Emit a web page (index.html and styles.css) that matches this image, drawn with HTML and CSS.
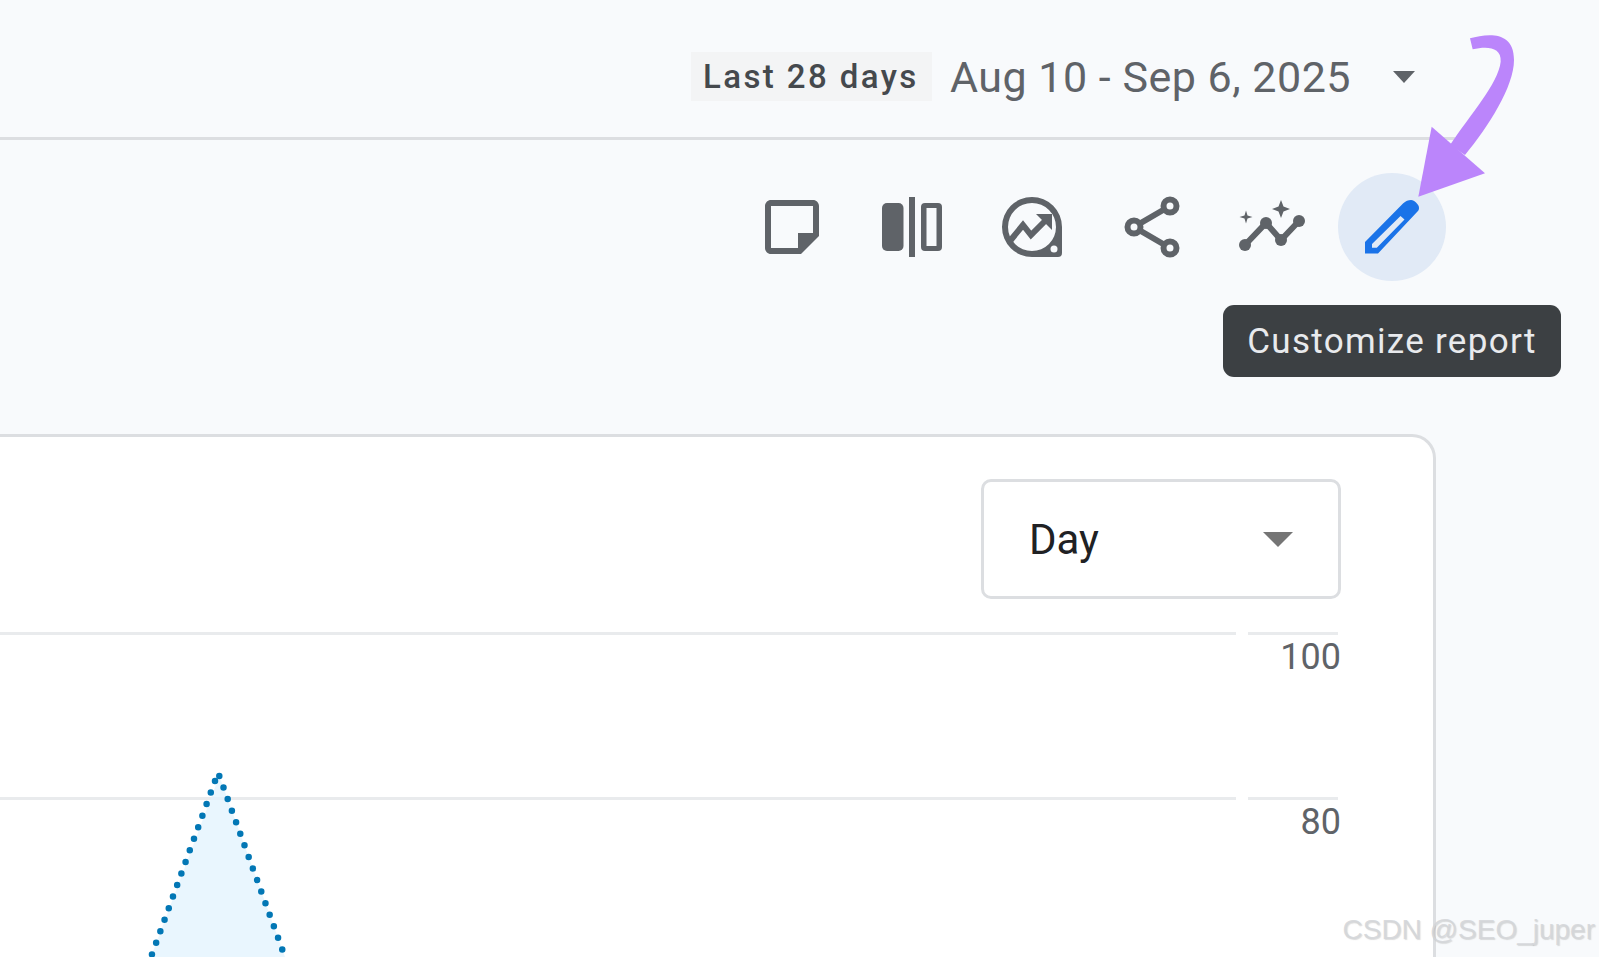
FILE: index.html
```html
<!DOCTYPE html>
<html lang="en">
<head>
    <meta charset="UTF-8">
    <title>Reports snapshot</title>
    <link rel="stylesheet" href="styles.css">
</head>
<body>
    <header class="header">
        <span class="range-label">Last 28 days</span>
        <span class="range-dates">Aug 10 - Sep 6, 2025</span>
        <span class="caret caret-header"></span>
    </header>

    <div class="toolbar">
        <button class="tool" type="button">
            <svg class="icon" viewBox="0 0 24 24"><path fill-rule="evenodd" d="M19 3H5c-1.100 0-2 .9-2 2v14c0 1.100.9 2 2 2h10l6-6V5c0-1.100-.9-2-2-2zm0 11h-5v5H5V5h14v9z"/></svg>
        </button>
        <button class="tool" type="button">
            <svg class="icon" viewBox="0 0 72 72">
                <rect x="6" y="12" width="21.500" height="48" rx="5"/>
                <rect x="33" y="6" width="6" height="60"/>
                <path fill-rule="evenodd" d="M49 12h13a4 4 0 0 1 4 4v40a4 4 0 0 1-4 4H49a4 4 0 0 1-4-4V16a4 4 0 0 1 4-4zm1.500 5v38h10V17z"/>
            </svg>
        </button>
        <button class="tool" type="button">
            <svg class="icon" viewBox="0 0 72 72">
                <path fill-rule="evenodd" d="M36 6a30 30 0 0 0 0 60h26a4 4 0 0 0 4-4V36A30 30 0 0 0 36 6zm0 6a24 24 0 1 1 0 48 24 24 0 0 1 0-48z"/>
                <circle class="icon-hole" cx="58" cy="58" r="3.500"/>
                <path class="icon-line icon-line-heavy" d="M14 50 27 34l8 10 17-17"/>
                <path d="M40 23h16v16z"/>
            </svg>
        </button>
        <button class="tool" type="button">
            <svg class="icon" viewBox="0 0 72 72">
                <path class="icon-line icon-line-heavy" d="M54 15 18 36l36 21"/>
                <circle class="icon-node" cx="54" cy="15" r="6.500"/>
                <circle class="icon-node" cx="18" cy="36" r="6.500"/>
                <circle class="icon-node" cx="54" cy="57" r="6.500"/>
            </svg>
        </button>
        <button class="tool" type="button">
            <svg class="icon" viewBox="0 0 72 72">
                <path class="icon-line icon-line-heavy" d="M9 54 30 32l15 17 18-19"/>
                <circle cx="9" cy="54" r="6"/>
                <circle cx="30" cy="32" r="6"/>
                <circle cx="45" cy="49" r="6"/>
                <circle cx="63" cy="30" r="6"/>
                <path d="M45 9l2.500 6.500L54 18l-6.500 2.500L45 27l-2.500-6.500L36 18l6.500-2.500z"/>
                <path d="M10 19.500l1.500 5 5 1.500-5 1.500-1.500 5-1.500-5-5-1.500 5-1.500z"/>
            </svg>
        </button>
        <button class="tool tool-active" type="button">
            <svg class="icon icon-blue" viewBox="0 0 72 72">
                <path fill-rule="evenodd" d="M9 62.500V51L47 12.500c2.500-2.500 5.500-3.500 8-3.500 2 0 3.500 1 5 2.500 2 2 3 3.500 3 5.500 0 1.500-.5 2.500-1.500 3.500L22 62.500zM16 53v3.800h4.800L48.500 28.500 44.500 25z"/>
            </svg>
            <span class="tooltip">Customize report</span>
        </button>
    </div>

    <section class="card">
        <div class="card-top">
            <div class="select">
                <span>Day</span>
                <span class="caret caret-select"></span>
            </div>
        </div>
        <div class="plot">
            <div class="grid-row">
                <div class="grid-line"><i></i><i class="tick"></i></div>
                <div class="axis-label">100</div>
            </div>
            <div class="grid-row">
                <div class="grid-line"><i></i><i class="tick"></i></div>
                <div class="axis-label">80</div>
            </div>
            <svg class="series" viewBox="100 772 220 185">
                <path class="series-fill" d="M219.300 776 285 957H151z"/>
                <path class="series-dots" d="M219.300 776 285 957"/>
                <path class="series-dots" d="M215 781 151 957"/>
            </svg>
        </div>
    </section>

    <svg class="arrow" viewBox="0 0 1440 1110">
        <path d="M1140 55C1190 42 1272 30 1272 120C1272 200 1195 320 1125 405L1080 375C1140 285 1225 190 1232 125C1235 80 1190 78 1148 88z"/>
        <path d="M1025 320 1185 460 985 530z"/>
    </svg>

    <div class="watermark">CSDN @SEO_juper</div>
</body>
</html>
```

FILE: styles.css
```css
* {
    box-sizing: border-box;
}
html, body {
    margin: 0;
    height: 100%;
}
body {
    position: relative;
    overflow: hidden;
    background-color: #f8fafc;
    font-family: 'Roboto', 'Liberation Sans', sans-serif;
}

/* date range header */
.header {
    display: flex;
    align-items: center;
    justify-content: flex-end;
    width: 1455px;
    height: 140px;
    padding: 16px 40px 0 0;
    border-bottom: 3px solid #dcdee1;
}
.range-label {
    display: block;
    width: 241px;
    height: 49px;
    line-height: 49px;
    padding-left: 12px;
    background-color: #f3f4f5;
    color: #45494d;
    font-size: 33px;
    font-weight: 500;
    letter-spacing: 2.4px;
    white-space: nowrap;
}
.range-dates {
    margin-left: 18px;
    color: #5f6368;
    font-size: 43px;
    letter-spacing: 0.5px;
    white-space: nowrap;
}
.caret {
    display: block;
    width: 0;
    height: 0;
    border-style: solid;
    border-color: transparent;
    border-bottom-width: 0;
}
.caret-header {
    margin-left: 42px;
    border-width: 12px 11px 0;
    border-top-color: #5f6368;
}

/* icon row */
.toolbar {
    display: flex;
    justify-content: flex-end;
    gap: 12px;
    padding: 33px 153px 0 0;
}
.tool {
    position: relative;
    display: flex;
    align-items: center;
    justify-content: center;
    width: 108px;
    height: 108px;
    padding: 0;
    border: none;
    border-radius: 50%;
    background: none;
    font-family: inherit;
}
.tool-active {
    background-color: #e1eaf6;
}
.icon {
    display: block;
    width: 72px;
    height: 72px;
    fill: #5f6368;
}
.icon-blue {
    fill: #1a73e8;
}
.icon-hole {
    fill: #f8fafc;
}
.icon-line {
    fill: none;
    stroke: #5f6368;
    stroke-width: 5;
}
.icon-line-heavy {
    stroke-width: 6;
}
.icon-node {
    fill: #f8fafc;
    stroke: #5f6368;
    stroke-width: 6;
}
.tooltip {
    position: absolute;
    top: 132px;
    left: -115px;
    width: 338px;
    height: 72px;
    line-height: 73px;
    border-radius: 11px;
    background-color: #3c4043;
    color: #e8eaed;
    font-size: 35px;
    letter-spacing: 1.3px;
    text-align: center;
    white-space: nowrap;
}

/* chart card */
.card {
    width: 1439px;
    height: 560px;
    margin: 153px 0 0 -3px;
    padding: 42px 92px 0 0;
    border: 3px solid #dcdee1;
    border-bottom: none;
    border-top-right-radius: 24px;
    background-color: #fff;
}
.card-top {
    display: flex;
    justify-content: flex-end;
}
.select {
    display: flex;
    align-items: center;
    justify-content: space-between;
    width: 360px;
    height: 120px;
    padding: 0 45px 0 45px;
    border: 3px solid #dcdee1;
    border-radius: 10px;
    color: #202124;
    font-size: 42px;
}
.caret-select {
    border-width: 15px 15px 0;
    border-top-color: #757575;
}
.plot {
    position: relative;
    margin-top: 33px;
}
.grid-row {
    height: 165px;
}
.grid-line {
    display: flex;
    gap: 12px;
    width: 1338px;
    height: 3px;
}
.grid-line i {
    flex: 1;
    background-color: #e9ebed;
}
.grid-line .tick {
    flex: none;
    width: 90px;
}
.axis-label {
    width: 1341px;
    margin-top: 2px;
    color: #5f6368;
    font-size: 36px;
    line-height: 41px;
    text-align: right;
}
.series {
    position: absolute;
    top: 140px;
    left: 100px;
    width: 220px;
    height: 185px;
}
.series-fill {
    fill: #dff2fd;
    opacity: 0.7;
}
.series-dots {
    fill: none;
    stroke: #0277b5;
    stroke-width: 6.500;
    stroke-linecap: round;
    stroke-dasharray: 0 12.300;
}

/* over everything */
.arrow {
    position: absolute;
    top: 20px;
    left: 1090px;
    width: 480px;
    height: 370px;
    fill: #bb85fb;
}
.watermark {
    position: absolute;
    right: 4px;
    bottom: 11px;
    color: rgba(212, 214, 217, 0.9);
    font-family: 'Liberation Sans', sans-serif;
    font-size: 28px;
    text-shadow: 1px 1px 1px rgba(120, 120, 120, 0.25);
    white-space: nowrap;
}
```
